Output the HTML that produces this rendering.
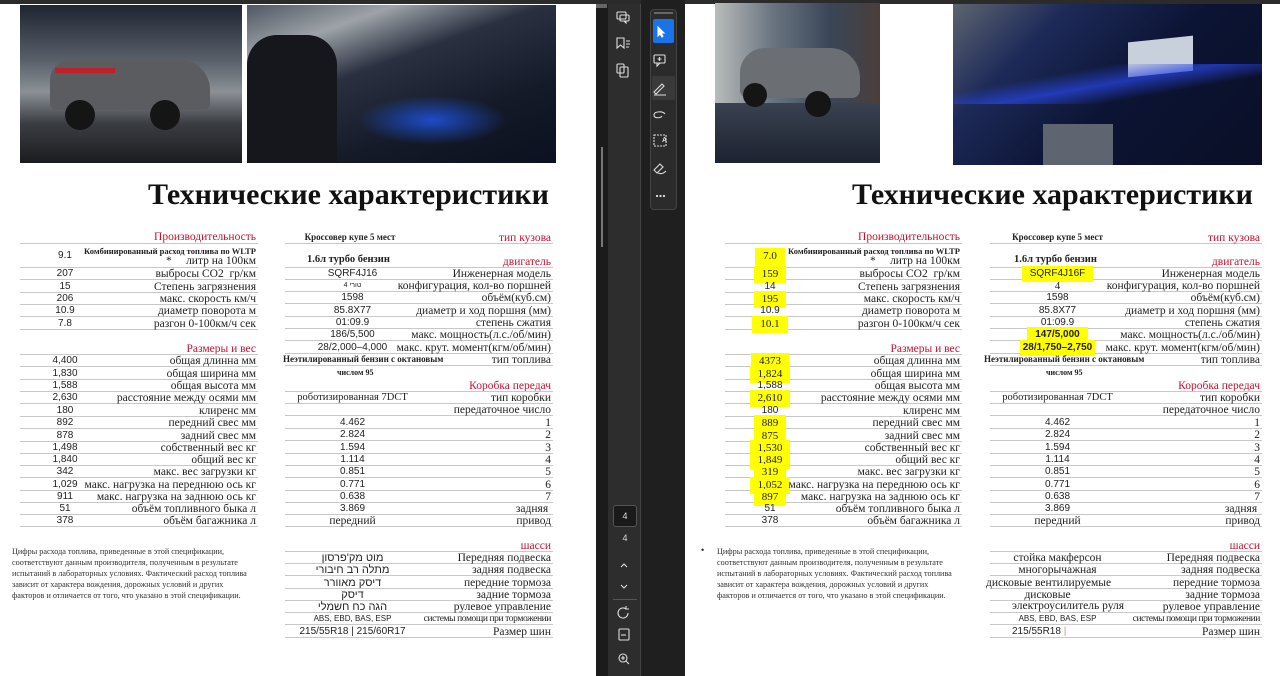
<!DOCTYPE html>
<html><head><meta charset="utf-8"><style>
*{margin:0;padding:0;box-sizing:border-box}
body{width:1280px;height:676px;overflow:hidden;background:#fff;position:relative;font-family:"Liberation Serif",serif;color:#222}
.a{position:absolute}
.c{position:absolute}
.r{position:absolute;left:0;right:0;height:12px;border-bottom:1px solid #c8c8c8}
.r i{position:absolute;top:0;font-style:normal;text-align:center;font:10px/12px "Liberation Sans",sans-serif;color:#222;white-space:nowrap}
.r b{position:absolute;right:2px;top:0;font:11.5px/12px "Liberation Serif",serif;color:#222;white-space:nowrap}
.A .r i{left:0;width:90px}
.B .r i{left:0;width:135px}
.h{position:absolute;right:2px;font:11.5px/12px "Liberation Serif",serif;color:#c8102e;white-space:nowrap}
.hl{position:absolute;left:0;right:0;height:1px;background:#c8c8c8}
.y{background:#ffff00;padding:2px 8px 3px}
.s{font-family:"Liberation Serif",serif!important;font-size:11px!important}
.ttl{position:absolute;font:bold 30px/34px "Liberation Serif",serif;color:#111;white-space:nowrap}
.note{position:absolute;font:8.2px/11px "Liberation Serif",serif;color:#333;width:240px}
.sm{font:bold 9px/10px "Liberation Serif",serif !important}
</style></head><body>
<div class="a" style="left:0;top:0;width:1280px;height:4px;background:#2b2b2b"></div>

<div class="a" style="left:20px;top:5px;width:222px;height:158px;background:linear-gradient(180deg,#1e2430 0%,#59606a 35%,#8b9096 55%,#3a3d42 75%,#1b1c1f 100%)">
 <div class="a" style="left:30px;top:55px;width:160px;height:50px;background:#5b5c60;border-radius:20px 30px 6px 6px"></div>
 <div class="a" style="left:35px;top:63px;width:60px;height:5px;background:#c0202a"></div>
 <div class="a" style="left:45px;top:95px;width:30px;height:30px;background:#151515;border-radius:50%"></div>
 <div class="a" style="left:130px;top:95px;width:30px;height:30px;background:#151515;border-radius:50%"></div>
</div>
<div class="a" style="left:247px;top:5px;width:309px;height:158px;background:linear-gradient(160deg,#505763 0%,#9da3a8 20%,#2a3040 40%,#141a28 70%,#0c1020 100%)">
 <div class="a" style="left:110px;top:90px;width:150px;height:50px;background:radial-gradient(ellipse,#1d4cc8 0%,rgba(20,40,120,0) 70%)"></div>
 <div class="a" style="left:0;top:30px;width:90px;height:128px;background:#15171d;border-radius:30px 30px 0 0"></div>
</div>
<div class="ttl" style="left:148px;top:178px">Технические характеристики</div>

<div class="c A" style="left:20px;top:0;width:238px">
 <div class="h" style="top:231px">Производительность</div>
 <div class="hl" style="top:243px"></div>
 <div class="r" style="top:244px;height:24px"><i style="line-height:24px">9.1</i><b class="sm" style="top:2px;font-size:8.5px!important">Комбинированный расход топлива по WLTP</b><b style="top:11px">*&nbsp;&nbsp;&nbsp;&nbsp;&nbsp;литр на 100км</b></div>
 <div class="r" style="top:268px"><i>207</i><b>выбросы CO2 &nbsp;гр/км</b></div>
 <div class="r" style="top:281px"><i>15</i><b>Степень загрязнения</b></div>
 <div class="r" style="top:293px"><i>206</i><b>макс. скорость км/ч</b></div>
 <div class="r" style="top:305px"><i>10.9</i><b>диаметр поворота м</b></div>
 <div class="r" style="top:318px"><i>7.8</i><b>разгон 0-100км/ч сек</b></div>
 <div class="h" style="top:343px">Размеры и вес</div>
 <div class="hl" style="top:354px"></div>
 <div class="r" style="top:355px"><i>4,400</i><b>общая длинна мм</b></div>
 <div class="r" style="top:368px"><i>1,830</i><b>общая ширина мм</b></div>
 <div class="r" style="top:380px"><i>1,588</i><b>общая высота мм</b></div>
 <div class="r" style="top:392px"><i>2,630</i><b>расстояние между осями мм</b></div>
 <div class="r" style="top:405px"><i>180</i><b>клиренс мм</b></div>
 <div class="r" style="top:417px"><i>892</i><b>передний свес мм</b></div>
 <div class="r" style="top:430px"><i>878</i><b>задний свес мм</b></div>
 <div class="r" style="top:442px"><i>1,498</i><b>собственный вес кг</b></div>
 <div class="r" style="top:454px"><i>1,840</i><b>общий вес кг</b></div>
 <div class="r" style="top:466px"><i>342</i><b>макс. вес загрузки кг</b></div>
 <div class="r" style="top:479px"><i>1,029</i><b>макс. нагрузка на переднюю ось кг</b></div>
 <div class="r" style="top:491px"><i>911</i><b>макс. нагрузка на заднюю ось кг</b></div>
 <div class="r" style="top:503px"><i>51</i><b>объём топливного быка л</b></div>
 <div class="r" style="top:515px"><i>378</i><b>объём багажника л</b></div>
</div>
<div class="note" style="left:12px;top:546px">Цифры расхода топлива, приведенные в этой спецификации, соответствуют данным производителя, полученным в результате испытаний в лабораторных условиях. Фактический расход топлива зависит от характера вождения, дорожных условий и других факторов и отличается от того, что указано в этой спецификации.</div>

<div class="c B" style="left:285px;top:0;width:268px">
 <div class="r" style="top:232px"><i class="sm" style="width:130px;font:bold 10px/12px 'Liberation Serif',serif">Кроссовер купе 5 мест</i><b style="color:#c8102e">тип кузова</b></div>
 <div class="a" style="left:22px;top:254px;font:bold 10.5px/12px 'Liberation Serif',serif">1.6л турбо бензин</div>
 <div class="h" style="top:256px">двигатель</div>
 <div class="hl" style="top:267px"></div>
 <div class="r" style="top:268px"><i>SQRF4J16</i><b>Инженерная модель</b></div>
 <div class="r" style="top:280px"><i style="font-size:7px">4 טורי</i><b>конфигурация, кол-во поршней</b></div>
 <div class="r" style="top:292px"><i>1598</i><b>объём(куб.см)</b></div>
 <div class="r" style="top:305px"><i>85.8X77</i><b>диаметр и ход поршня (мм)</b></div>
 <div class="r" style="top:317px"><i>01:09.9</i><b>степень сжатия</b></div>
 <div class="r" style="top:329px"><i>186/5,500</i><b>макс. мощность(л.с./об/мин)</b></div>
 <div class="r" style="top:342px"><i>28/2,000–4,000</i><b>макс. крут. момент(кгм/об/мин)</b></div>
 <div class="r" style="top:354px"><i class="sm" style="left:-2px;width:auto;font:bold 8px/12px 'Liberation Serif',serif">Неэтилированный бензин с октановым</i><b>тип топлива</b></div>
 <div class="a" style="left:52px;top:367px;font:bold 8px/11px 'Liberation Serif',serif">числом 95</div>
 <div class="h" style="top:380px">Коробка передач</div>
 <div class="hl" style="top:391px"></div>
 <div class="r" style="top:392px"><i style="font:10.5px/12px 'Liberation Serif',serif">роботизированная 7DCT</i><b>тип коробки</b></div>
 <div class="r" style="top:404px"><i></i><b>передаточное число</b></div>
 <div class="r" style="top:417px"><i>4.462</i><b>1</b></div>
 <div class="r" style="top:429px"><i>2.824</i><b>2</b></div>
 <div class="r" style="top:442px"><i>1.594</i><b>3</b></div>
 <div class="r" style="top:454px"><i>1.114</i><b>4</b></div>
 <div class="r" style="top:466px"><i>0.851</i><b>5</b></div>
 <div class="r" style="top:479px"><i>0.771</i><b>6</b></div>
 <div class="r" style="top:491px"><i>0.638</i><b>7</b></div>
 <div class="r" style="top:503px"><i>3.869</i><b>задняя&nbsp;</b></div>
 <div class="r" style="top:515px"><i style="font:11.5px/12px 'Liberation Serif',serif">передний</i><b>привод</b></div>
 <div class="h" style="top:540px">шасси</div>
 <div class="hl" style="top:551px"></div>
 <div class="r" style="top:552px"><i style="font:11px/12px 'Liberation Sans',sans-serif">מוט מק'פרסון</i><b>Передняя подвеска</b></div>
 <div class="r" style="top:564px"><i style="font:11px/12px 'Liberation Sans',sans-serif">מתלה רב חיבורי</i><b>задняя подвеска</b></div>
 <div class="r" style="top:577px"><i style="font:11px/12px 'Liberation Sans',sans-serif">דיסק מאוורר</i><b>передние тормоза</b></div>
 <div class="r" style="top:589px"><i style="font:11px/12px 'Liberation Sans',sans-serif">דיסק</i><b>задние тормоза</b></div>
 <div class="r" style="top:601px"><i style="font:11px/12px 'Liberation Sans',sans-serif">הגה כח חשמלי</i><b>рулевое управление</b></div>
 <div class="r" style="top:613px"><i style="font-size:8px">ABS, EBD, BAS, ESP</i><b style="font-size:9.5px;letter-spacing:-0.4px">системы помощи при торможении</b></div>
 <div class="r" style="top:626px"><i>215/55R18 | 215/60R17</i><b>Размер шин</b></div>
</div>

<!-- dark center -->
<div class="a" style="left:596px;top:4px;width:12px;height:672px;background:#1b1b1b"><div class="a" style="left:5px;top:143px;width:2px;height:100px;background:#777"></div><div class="a" style="left:0;top:0;width:11px;height:4px;background:#666"></div></div>
<div class="a" style="left:608px;top:4px;width:33px;height:672px;background:#2d2d2d;border-right:1px solid #444"></div>
<div class="a" style="left:641px;top:0;width:44px;height:676px;background:#1f1f1f"></div>
<div class="a" style="left:650px;top:9px;width:27px;height:201px;background:#2b2b2b;border:1px solid #444;border-radius:4px"></div>
<div class="a" style="left:654px;top:12px;width:19px;height:2px;background:#666"></div>
<div class="a" style="left:653px;top:19px;width:21px;height:24px;background:#1a73e8;border-radius:2px"></div>
<div class="a" style="left:652px;top:76px;width:23px;height:24px;background:#3a3a3a;border-radius:2px"></div>
<svg class="a" style="left:596px;top:0" width="90" height="676" viewBox="0 0 90 676" fill="none" stroke="#ddd" stroke-width="1.1">
 <rect x="21" y="12" width="9" height="7" rx="1"/><rect x="24" y="15" width="9" height="6" rx="1"/><path d="M30 21v2l-2-2"/>
 <path d="M21 38h7v10l-3.5-3-3.5 3z"/><path d="M30 41h4M30 44h4M30 47h3"/>
 <rect x="21" y="64" width="7" height="9" rx="1"/><rect x="24" y="67" width="8" height="10" rx="1"/>
 <path d="M62 27l0 9 2-2 2 3 1-1-2-3h3z" stroke="#fff" fill="#fff"/>
 <rect x="58" y="55" width="11" height="8" rx="1"/><path d="M61 63l0 3 3-3M63.5 57v4M61.5 59h4"/>
 <path d="M58 92l8-8 2 2-8 8zM58 95h12"/>
 <path d="M69 114c-2-3-11-3-11 1s7 3 8 1"/>
 <rect x="58" y="135" width="12" height="11" stroke-dasharray="2 1"/>
 <path d="M58 170l6-6 3 3-6 6zM62 173c2 1 5 1 8-2"/>
 <circle cx="61" cy="196" r=".6" fill="#ccc"/><circle cx="64.5" cy="196" r=".6" fill="#ccc"/><circle cx="68" cy="196" r=".6" fill="#ccc"/>
 <path d="M25 567l3-3 3 3M25 585l3 3 3-3"/>
 <path d="M32 613a5 5 0 1 1-2-4M30 606v3h3"/>
 <rect x="23" y="629" width="10" height="11" rx="1"/><path d="M25 635h5"/>
 <circle cx="27" cy="658" r="4"/><path d="M30 661l3 3M25 658h4M27 656v4"/>
</svg>
<div class="a" style="left:660px;top:137px;width:9px;font:bold 7px 'Liberation Sans';color:#ddd;text-align:center">A</div>
<div class="a" style="left:613px;top:505px;width:24px;height:22px;background:#1a1a1a;border:1px solid #555;border-radius:3px;color:#ddd;font:9px/20px 'Liberation Sans',sans-serif;text-align:center">4</div>
<div class="a" style="left:613px;top:533px;width:24px;color:#ddd;font:9px 'Liberation Sans',sans-serif;text-align:center">4</div>
<div class="a" style="left:613px;top:599px;width:24px;height:1px;background:#555"></div>

<!-- right page images -->
<div class="a" style="left:715px;top:3px;width:165px;height:160px;background:linear-gradient(90deg,#b9bcbb 0%,#6a7480 35%,#3a4658 70%,#4a3e3a 100%)">
 <div class="a" style="left:0;top:100px;width:165px;height:60px;background:linear-gradient(180deg,#3a4150,#1c2230)"></div>
 <div class="a" style="left:25px;top:45px;width:120px;height:50px;background:#6b6e73;border-radius:25px 30px 8px 8px"></div>
 <div class="a" style="left:28px;top:80px;width:24px;height:24px;background:#151515;border-radius:50%"></div>
 <div class="a" style="left:90px;top:88px;width:26px;height:26px;background:#151515;border-radius:50%"></div>
</div>
<div class="a" style="left:953px;top:4px;width:309px;height:161px;background:linear-gradient(135deg,#5d6470 0%,#1d2a58 25%,#0c1434 55%,#0a0f26 100%)">
 <div class="a" style="left:175px;top:35px;width:65px;height:35px;background:#c8d0dc;transform:skewY(-6deg)"></div>
 <div class="a" style="left:0;top:60px;width:309px;height:40px;background:linear-gradient(170deg,rgba(40,70,230,.0) 30%,rgba(40,70,230,.7) 50%,rgba(40,70,230,0) 70%)"></div>
 <div class="a" style="left:90px;top:120px;width:70px;height:41px;background:#5e6470"></div>
</div>
<div class="ttl" style="left:852px;top:178px">Технические характеристики</div>

<div class="c A" style="left:725px;top:0;width:237px">
 <div class="h" style="top:231px">Производительность</div>
 <div class="hl" style="top:243px"></div>
 <div class="r" style="top:244px;height:24px"><i class="s" style="line-height:24px"><span class="y">7.0</span></i><b class="sm" style="top:2px;font-size:8.5px!important">Комбинированный расход топлива по WLTP</b><b style="top:11px">*&nbsp;&nbsp;&nbsp;&nbsp;&nbsp;литр на 100км</b></div>
 <div class="r" style="top:268px"><i class="s"><span class="y">159</span></i><b>выбросы CO2 &nbsp;гр/км</b></div>
 <div class="r" style="top:281px"><i>14</i><b>Степень загрязнения</b></div>
 <div class="r" style="top:293px"><i class="s"><span class="y">195</span></i><b>макс. скорость км/ч</b></div>
 <div class="r" style="top:305px"><i>10.9</i><b>диаметр поворота м</b></div>
 <div class="r" style="top:318px"><i class="s"><span class="y">10.1</span></i><b>разгон 0-100км/ч сек</b></div>
 <div class="h" style="top:343px">Размеры и вес</div>
 <div class="hl" style="top:354px"></div>
 <div class="r" style="top:355px"><i class="s"><span class="y">4373</span></i><b>общая длинна мм</b></div>
 <div class="r" style="top:368px"><i class="s"><span class="y">1,824</span></i><b>общая ширина мм</b></div>
 <div class="r" style="top:380px"><i>1,588</i><b>общая высота мм</b></div>
 <div class="r" style="top:392px"><i class="s"><span class="y">2,610</span></i><b>расстояние между осями мм</b></div>
 <div class="r" style="top:405px"><i>180</i><b>клиренс мм</b></div>
 <div class="r" style="top:417px"><i class="s"><span class="y">889</span></i><b>передний свес мм</b></div>
 <div class="r" style="top:430px"><i class="s"><span class="y">875</span></i><b>задний свес мм</b></div>
 <div class="r" style="top:442px"><i class="s"><span class="y">1,530</span></i><b>собственный вес кг</b></div>
 <div class="r" style="top:454px"><i class="s"><span class="y">1,849</span></i><b>общий вес кг</b></div>
 <div class="r" style="top:466px"><i class="s"><span class="y">319</span></i><b>макс. вес загрузки кг</b></div>
 <div class="r" style="top:479px"><i class="s"><span class="y">1,052</span></i><b>макс. нагрузка на переднюю ось кг</b></div>
 <div class="r" style="top:491px"><i class="s"><span class="y">897</span></i><b>макс. нагрузка на заднюю ось кг</b></div>
 <div class="r" style="top:503px"><i>51</i><b>объём топливного быка л</b></div>
 <div class="r" style="top:515px"><i>378</i><b>объём багажника л</b></div>
</div>
<div class="a" style="left:701px;top:545px;font:9px 'Liberation Sans';color:#333">•</div>
<div class="note" style="left:717px;top:546px">Цифры расхода топлива, приведенные в этой спецификации, соответствуют данным производителя, полученным в результате испытаний в лабораторных условиях. Фактический расход топлива зависит от характера вождения, дорожных условий и других факторов и отличается от того, что указано в этой спецификации.</div>

<div class="c B" style="left:990px;top:0;width:272px">
 <div class="r" style="top:232px"><i class="sm" style="width:135px;font:bold 10px/12px 'Liberation Serif',serif">Кроссовер купе 5 мест</i><b style="color:#c8102e">тип кузова</b></div>
 <div class="a" style="left:24px;top:254px;font:bold 10.5px/12px 'Liberation Serif',serif">1.6л турбо бензин</div>
 <div class="h" style="top:256px">двигатель</div>
 <div class="hl" style="top:267px"></div>
 <div class="r" style="top:268px"><i><span class="y">SQRF4J16F</span></i><b>Инженерная модель</b></div>
 <div class="r" style="top:280px"><i class="s">4</i><b>конфигурация, кол-во поршней</b></div>
 <div class="r" style="top:292px"><i>1598</i><b>объём(куб.см)</b></div>
 <div class="r" style="top:305px"><i>85.8X77</i><b>диаметр и ход поршня (мм)</b></div>
 <div class="r" style="top:317px"><i>01:09.9</i><b>степень сжатия</b></div>
 <div class="r" style="top:329px"><i style="font-weight:bold"><span class="y">147/5,000</span></i><b>макс. мощность(л.с./об/мин)</b></div>
 <div class="r" style="top:342px"><i style="font-weight:bold"><span class="y" style="padding:2px 3px 3px">28/1,750–2,750</span></i><b>макс. крут. момент(кгм/об/мин)</b></div>
 <div class="r" style="top:354px"><i class="sm" style="left:-6px;width:auto;font:bold 8px/12px 'Liberation Serif',serif">Неэтилированный бензин с октановым</i><b>тип топлива</b></div>
 <div class="a" style="left:56px;top:367px;font:bold 8px/11px 'Liberation Serif',serif">числом 95</div>
 <div class="h" style="top:380px">Коробка передач</div>
 <div class="hl" style="top:391px"></div>
 <div class="r" style="top:392px"><i style="font:10.5px/12px 'Liberation Serif',serif">роботизированная 7DCT</i><b>тип коробки</b></div>
 <div class="r" style="top:404px"><i></i><b>передаточное число</b></div>
 <div class="r" style="top:417px"><i>4.462</i><b>1</b></div>
 <div class="r" style="top:429px"><i>2.824</i><b>2</b></div>
 <div class="r" style="top:442px"><i>1.594</i><b>3</b></div>
 <div class="r" style="top:454px"><i>1.114</i><b>4</b></div>
 <div class="r" style="top:466px"><i>0.851</i><b>5</b></div>
 <div class="r" style="top:479px"><i>0.771</i><b>6</b></div>
 <div class="r" style="top:491px"><i>0.638</i><b>7</b></div>
 <div class="r" style="top:503px"><i>3.869</i><b>задняя&nbsp;</b></div>
 <div class="r" style="top:515px"><i style="font:11.5px/12px 'Liberation Serif',serif">передний</i><b>привод</b></div>
 <div class="h" style="top:540px">шасси</div>
 <div class="hl" style="top:551px"></div>
 <div class="r" style="top:552px"><i style="font:11.5px/12px 'Liberation Serif',serif">стойка макферсон</i><b>Передняя подвеска</b></div>
 <div class="r" style="top:564px"><i style="font:11.5px/12px 'Liberation Serif',serif">многорычажная</i><b>задняя подвеска</b></div>
 <div class="r" style="top:577px"><i style="font:11.5px/12px 'Liberation Serif',serif;left:-4px;width:auto">дисковые вентилируемые</i><b>передние тормоза</b></div>
 <div class="r" style="top:589px"><i style="font:11.5px/12px 'Liberation Serif',serif;left:-10px">дисковые</i><b>задние тормоза</b></div>
 <div class="r" style="top:601px"><i style="font:11.5px/10px 'Liberation Serif',serif;left:0;width:auto;padding-left:22px">электроусилитель руля</i><b>рулевое управление</b></div>
 <div class="r" style="top:613px"><i style="font-size:8px">ABS, EBD, BAS, ESP</i><b style="font-size:9.5px;letter-spacing:-0.4px">системы помощи при торможении</b></div>
 <div class="r" style="top:626px"><i style="width:auto;left:22px">215/55R18 <span style="color:#e88">|</span></i><b>Размер шин</b></div>
</div>
</body></html>
